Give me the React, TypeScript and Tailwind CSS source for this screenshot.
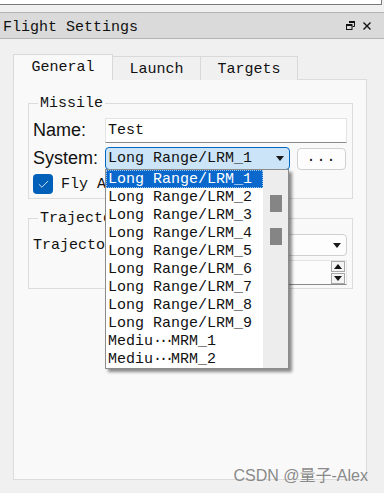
import { Check } from "lucide-react";

const items = [
  "Long Range/LRM_1",
  "Long Range/LRM_2",
  "Long Range/LRM_3",
  "Long Range/LRM_4",
  "Long Range/LRM_5",
  "Long Range/LRM_6",
  "Long Range/LRM_7",
  "Long Range/LRM_8",
  "Long Range/LRM_9",
];

const elided = ["MRM_1", "MRM_2"];

function Arrow() {
  return (
    <svg width="8" height="5" viewBox="0 0 8 5">
      <path d="M0 0 H8 L4 5 Z" fill="#1a1a1a" />
    </svg>
  );
}

function Popup() {
  return (
    <div className="absolute left-[105px] top-[169px] w-[184px] h-[200px] flex border border-[#8c8c8c] bg-[#ededed] shadow-[3px_3px_3px_rgba(0,0,0,0.45)]">
      <div className="w-[157px] bg-white">
        {items.map((it, i) => (
          <div
            key={it}
            className={
              i === 0
                ? "h-[18px] leading-[17px] pl-[1px] bg-[#0a68cc] text-white border border-dotted border-[#9cc8f0]"
                : "h-[18px] leading-[19px] pl-[2px] text-[#111]"
            }
          >
            {it}
          </div>
        ))}
        {elided.map((it) => (
          <div key={it} className="h-[18px] leading-[19px] pl-[2px] text-[#111] flex">
            <span>Mediu</span>
            <span className="w-[18px] text-center tracking-[-3px]">···</span>
            <span>{it}</span>
          </div>
        ))}
      </div>
      <div className="flex-1 flex flex-col">
        <div className="ml-[7px] mt-[25px] w-[12px] h-[17px] bg-[#858585]" />
        <div className="ml-[7px] mt-[16px] w-[12px] h-[17px] bg-[#858585]" />
      </div>
    </div>
  );
}

export default function App() {
  return (
    <div className="relative w-[384px] h-[493px] overflow-hidden bg-[#f0f0f0] text-[15px] text-[#111] font-['Liberation_Mono',monospace]">
      <div className="h-[5px] w-[382px] bg-white border-r border-b border-[#7a7a7a]" />

      <div className="mt-[7px] h-[27px] flex items-center justify-between border-y border-[#b4b4b4] bg-[#dadada] pl-[3px] pr-[13px]">
        <span className="leading-none pt-[3px]">Flight Settings</span>
        <div className="flex items-center gap-[8px]">
          <svg width="9" height="9" viewBox="0 0 9 9">
            <path d="M3 0.5 H8.5 V5.5 H6.5" fill="none" stroke="#111" strokeWidth="1" />
            <rect x="3" y="0" width="6" height="2" fill="#111" />
            <rect x="0.5" y="3.5" width="5.5" height="5" fill="none" stroke="#111" strokeWidth="1" />
            <rect x="0" y="3" width="6" height="2" fill="#111" />
          </svg>
          <svg width="8" height="8" viewBox="0 0 8 8">
            <path d="M0.5 0.5 L7.5 7.5 M7.5 0.5 L0.5 7.5" stroke="#111" strokeWidth="1.4" />
          </svg>
        </div>
      </div>

      <div className="pl-[13px] pt-[15px]">
        <div className="flex items-end">
          <div className="relative z-10 w-[100px] h-[26px] flex items-center justify-center pt-[2px] bg-[#f9f9f9] border border-b-0 border-[#d9d9d9]">
            General
          </div>
          <div className="w-[88px] h-[24px] flex items-center justify-center pt-[3px] bg-[#f0f0f0] border-t border-r border-[#d9d9d9]">
            Launch
          </div>
          <div className="w-[97px] h-[24px] flex items-center justify-center pt-[3px] bg-[#f0f0f0] border-t border-r border-[#d9d9d9]">
            Targets
          </div>
        </div>

        <div className="-mt-px w-[354px] h-[401px] border border-[#dcdcdc] bg-[#f9f9f9] pl-[14px] pr-[13px] pt-[14px]">
          <fieldset className="border border-[#dcdcdc] pl-[4px] pr-[5px] pb-[4px]">
            <legend className="ml-[5px] px-[2px] leading-[18px] pt-[1px]">Missile</legend>
            <div className="mt-[5px] flex items-center h-[25px]">
              <span className="w-[72px] text-[18px] font-['Liberation_Sans',sans-serif]">Name:</span>
              <div className="flex-1 h-[25px] flex items-center pl-[2px] pt-[2px] bg-white border border-[#e3e3e3] border-b-[#8a8a8a]">
                Test
              </div>
            </div>
            <div className="mt-[4px] flex items-center h-[23px]">
              <span className="w-[72px] text-[18px] font-['Liberation_Sans',sans-serif]">System:</span>
              <div className="w-[185px] h-[23px] flex items-center justify-between pl-[2px] pr-[5px] rounded-[4px] border border-[#0067c0] bg-[#cce4f7]">
                <span className="pt-[2px]">Long Range/LRM_1</span>
                <Arrow />
              </div>
              <div className="ml-[7px] w-[49px] h-[22px] flex items-center justify-center rounded-[4px] border border-[#d0d0d0] bg-[#fdfdfd] tracking-[1px]">
                ...
              </div>
            </div>
            <div className="mt-[4px] flex items-center h-[20px]">
              <div className="w-[20px] h-[20px] rounded-[4px] bg-[#005fb8] flex items-center justify-center">
                <Check className="w-[13px] h-[13px] text-white" strokeWidth={1.5} />
              </div>
              <span className="ml-[8px] pt-[2px]">Fly Along</span>
            </div>
          </fieldset>

          <fieldset className="mt-[10px] border border-[#dcdcdc] pl-[4px] pr-[5px] pb-[3px]">
            <legend className="ml-[5px] px-[2px] leading-[18px] pt-[1px]">Trajectory</legend>
            <div className="mt-[6px] flex items-center h-[22px]">
              <span className="w-[112px] pt-[2px]">Trajectory:</span>
              <div className="flex-1 h-[22px] flex items-center justify-end pr-[5px] rounded-[4px] border border-[#d0d0d0] bg-[#fdfdfd]">
                <Arrow />
              </div>
            </div>
            <div className="mt-[4px] ml-[112px] h-[25px] flex items-center justify-end pr-[1px] bg-[#fcfcfc] border border-[#e3e3e3] border-b-[#8a8a8a]">
              <div className="flex flex-col gap-[1px]">
                <div className="w-[14px] h-[11px] flex items-center justify-center border border-[#a8a8a8] bg-[#f4f4f4]">
                  <svg width="8" height="5" viewBox="0 0 8 5">
                    <path d="M0 5 H8 L4 0 Z" fill="#111" />
                  </svg>
                </div>
                <div className="w-[14px] h-[11px] flex items-center justify-center border border-[#a8a8a8] bg-[#f4f4f4]">
                  <Arrow />
                </div>
              </div>
            </div>
          </fieldset>
        </div>
      </div>

      <Popup />

      <div className="absolute right-[16px] bottom-[5px] text-[16px] text-[#8a8a8a] font-['Liberation_Sans','Noto_Sans_CJK_SC',sans-serif]">
        CSDN @量子-Alex
      </div>
    </div>
  );
}
